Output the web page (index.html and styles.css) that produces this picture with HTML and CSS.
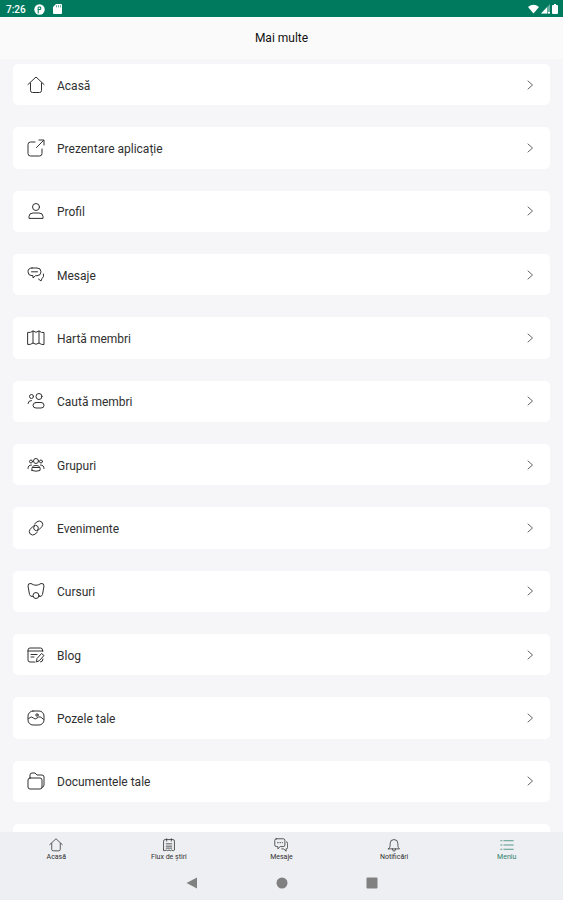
FILE: index.html
```html
<!DOCTYPE html>
<html lang="ro">
<head>
<meta charset="utf-8">
<meta name="viewport" content="width=device-width, initial-scale=1">
<title>Mai multe</title>
<link rel="stylesheet" href="styles.css">
</head>
<body>
<svg class="sprite" aria-hidden="true">
  <symbol id="home" viewBox="0 0 18 18"><path d="M1 8.500 9 1l8 7.500M3.500 7v7.500q0 2 2 2h7q2 0 2-2V7"/></symbol>
  <symbol id="chevron" viewBox="0 0 8 12"><path d="m2 2 4.500 4L2 10"/></symbol>
</svg>
<div class="screen">
  <div class="status">
    <span class="clock">7:26</span>
    <svg class="solid" width="11" height="11" viewBox="0 0 11 11"><circle cx="5.500" cy="5.500" r="5.200"/><path class="cut" d="M4.200 9V3h2.500v2.500H4.200"/></svg>
    <svg class="solid" width="9" height="10" viewBox="0 0 9 10"><path d="M3 0h5q1 0 1 1v8q0 1-1 1H1q-1 0-1-1V3Z"/><path class="cut thin" d="M3.500 1.500V3m2-1.500V3m2-1.500V3"/></svg>
    <span class="signals">
      <svg class="solid" width="11" height="10" viewBox="0 0 11 10"><path d="M0 3Q5.500-1.500 11 3L5.500 9.500Z"/></svg>
      <svg class="solid" width="9" height="10" viewBox="0 0 9 10"><path opacity=".4" d="M9 0v9.500H0Z"/><path d="M6 3.200v6.300H0ZM7 8h2v1.500H7Z"/></svg>
      <svg class="solid" width="6" height="10" viewBox="0 0 6 10"><path d="M2 0h2v1h1q1 0 1 1v7q0 1-1 1H1q-1 0-1-1V2q0-1 1-1h1Z"/></svg>
    </span>
  </div>
  <header class="header"><h1>Mai multe</h1></header>
  <main class="content">
    <nav class="list" aria-label="Mai multe">
      <a class="card" href="#"><svg class="icon"><use href="#home"/></svg><span>Acasă</span><svg class="chevron"><use href="#chevron"/></svg></a>
      <a class="card" href="#"><svg class="icon" viewBox="0 0 18 18"><path d="M8 3H3.500q-2.500 0-2.500 2.500v9Q1 17 3.500 17h9q2.500 0 2.500-2.500V10M9.500 8.500 16.500 1.500M12 1h5v5"/></svg><span>Prezentare aplicație</span><svg class="chevron"><use href="#chevron"/></svg></a>
      <a class="card" href="#"><svg class="icon" viewBox="0 0 18 18"><circle cx="9" cy="5" r="3.500"/><path d="M2 16v-1.500q0-3.500 4-3.500h6q4 0 4 3.500V16Z"/></svg><span>Profil</span><svg class="chevron"><use href="#chevron"/></svg></a>
      <a class="card" href="#"><svg class="icon" viewBox="0 0 18 18"><path d="M5 2h5q4 0 4 3.800T10 9.700H8.500L6 12V9.700H5Q1 9.700 1 5.800T5 2ZM16.500 8q.8 3-1.500 4.500l-1 2.500-2.500-2M4.500 5.800h6"/></svg><span>Mesaje</span><svg class="chevron"><use href="#chevron"/></svg></a>
      <a class="card" href="#"><svg class="icon" viewBox="0 0 18 18"><path d="M1 3.500q2.500.5 5-1.500 3 2.500 6 0 2.500 2 5 1.500v12q-2.500.5-5-1.500-3 2.500-6 0-2.500 2-5 1.500ZM6 2v12m6-12v12"/></svg><span>Hartă membri</span><svg class="chevron"><use href="#chevron"/></svg></a>
      <a class="card" href="#"><svg class="icon" viewBox="0 0 18 18"><circle cx="4.500" cy="4.500" r="2"/><circle cx="12" cy="4.500" r="3"/><path d="M1 11.500q0-3 3.500-3M9 10.500h5q3 0 3 2.800t-3 2.700H9q-3 0-3-2.700t3-2.800Z"/></svg><span>Caută membri</span><svg class="chevron"><use href="#chevron"/></svg></a>
      <a class="card" href="#"><svg class="icon" viewBox="0 0 18 18"><circle cx="9" cy="5" r="2.500"/><circle cx="4" cy="5.500" r="1.500"/><circle cx="14" cy="5.500" r="1.500"/><path d="M5 14.500q-1-5 4-5t4 5q-4 1.500-8 0ZM1 12.500Q.8 9 4.500 9M17 12.500Q17.200 9 13.500 9M5.500 11.500h7"/></svg><span>Grupuri</span><svg class="chevron"><use href="#chevron"/></svg></a>
      <a class="card" href="#"><svg class="icon" viewBox="0 0 18 18"><path d="m7.500 5 2.500-2.200q2.500-1.800 4.800.2 2 2.500 0 4.800l-3 3q-2.300 1.800-4.300.2-2-2 0-4.200M10.500 13 8 15.200q-2.500 1.800-4.800-.2-2-2.500 0-4.800l3-3q2.300-1.800 4.300-.2 2 2 0 4.200"/></svg><span>Evenimente</span><svg class="chevron"><use href="#chevron"/></svg></a>
      <a class="card" href="#"><svg class="icon" viewBox="0 0 18 18"><path d="M6 14.500q-3 .5-3.500-2L1 4q0-3 3-2.500Q9 5 14 1.500q3-.5 3 2.500l-1.500 8.500q-.5 2.500-3.500 2"/><circle cx="9" cy="13.500" r="3"/></svg><span>Cursuri</span><svg class="chevron"><use href="#chevron"/></svg></a>
      <a class="card" href="#"><svg class="icon" viewBox="0 0 18 18"><path d="M15.500 5V4q0-2-2-2H3Q1 2 1 4v10q0 2 2 2h5M1 5h15M4 8.500h6M4 11h3M9.500 15.500l.5-3 4.500-5 2.500 2-4.500 5Zm4 .5q2.500 0 2.500-3"/></svg><span>Blog</span><svg class="chevron"><use href="#chevron"/></svg></a>
      <a class="card" href="#"><svg class="icon" viewBox="0 0 18 18"><rect x="1" y="2" width="16" height="14" rx="5"/><path d="M1.500 9.500q3-3 5-.5 1.500 2 3.500 0 3-3 6.500 1.500"/><circle cx="10" cy="6" r="1.200"/></svg><span>Pozele tale</span><svg class="chevron"><use href="#chevron"/></svg></a>
      <a class="card" href="#"><svg class="icon" viewBox="0 0 18 18"><rect x="1" y="6" width="14" height="11" rx="2"/><path d="M3 6V3q0-2 2-2h3l2 2h5q2 0 2 2v8q0 2-2 2.500"/></svg><span>Documentele tale</span><svg class="chevron"><use href="#chevron"/></svg></a>
      <div class="card-edge"></div>
    </nav>
  </main>
  <nav class="tabs" aria-label="Navigare">
    <a href="#"><svg class="tab-icon"><use href="#home"/></svg><span>Acasă</span></a>
    <a href="#"><svg class="tab-icon" viewBox="0 0 18 18"><path d="M2 15.500V4q0-2 2-2h10q2 0 2 2v11.500q-1.500 2-3.500 0-1.800 1.500-3.500 0-1.800 1.500-3.500 0-2 2-3.500 0ZM6 1v3m6-3v3M5.500 7.500h7m-7 3h7M5.500 13h7"/></svg><span>Flux de știri</span></a>
    <a href="#"><svg class="tab-icon" viewBox="0 0 18 18"><path d="M3 1h9q2 0 2 2v6q0 2-2 2H8l-3 3v-3H3q-2 0-2-2V3q0-2 2-2ZM16 5q1.500 0 1.500 2v5q0 2-2 2v3l-3-3H10M4.500 6h1m2 0h1m2 0h.5"/></svg><span>Mesaje</span></a>
    <a href="#"><svg class="tab-icon" viewBox="0 0 18 18"><path d="M2 14h14q-2-2-2-4V7q0-5-5-5T4 7v3q0 2-2 4Zm5 0q0 3 2 3t2-3"/></svg><span>Notificări</span></a>
    <a class="active" href="#" aria-current="page"><svg class="tab-icon" viewBox="0 0 18 18"><path d="M5 3.500h12M5 9h12M5 14.500h12M1 3.500h1.500M1 9h1.500M1 14.500h1.500"/></svg><span>Meniu</span></a>
  </nav>
  <div class="system">
    <button type="button" aria-label="Înapoi"><svg width="12" height="12" viewBox="0 0 12 12"><path d="M11 .5v11L.5 6Z"/></svg></button>
    <button type="button" aria-label="Ecran principal"><svg width="12" height="12" viewBox="0 0 12 12"><circle cx="6" cy="6" r="5.500"/></svg></button>
    <button type="button" aria-label="Recente"><svg width="12" height="12" viewBox="0 0 12 12"><rect x=".5" y=".5" width="11" height="11" rx="1"/></svg></button>
  </div>
</div>
</body>
</html>
```
FILE: styles.css
```css
* {
  box-sizing: border-box;
}

body {
  margin: 0;
  background: #f6f6f8;
  color: #303030;
  font-family: Roboto, "Liberation Sans", sans-serif;
}

a {
  color: inherit;
  text-decoration: none;
}

svg {
  display: block;
  flex: none;
  fill: none;
  stroke: currentColor;
  stroke-linecap: round;
  stroke-linejoin: round;
}

.sprite {
  position: absolute;
  width: 0;
  height: 0;
}

.screen {
  display: flex;
  flex-direction: column;
  height: 100vh;
}

.status {
  display: flex;
  align-items: center;
  gap: 8px;
  padding: 1px 5px 0 6px;
  height: 17px;
  background: #007a5f;
  color: #fff;
}

.clock {
  font-size: 10px;
  font-weight: 500;
}

.solid {
  fill: #fff;
  stroke: none;
}

.cut {
  fill: none;
  stroke: #007a5f;
}

.thin {
  stroke-width: 0.6;
}

.signals {
  display: flex;
  gap: 2px;
  margin-left: auto;
}

.header {
  display: flex;
  align-items: center;
  justify-content: center;
  height: 42px;
  background: #fafafa;
}

h1 {
  margin: 0;
  color: #111;
  font-size: 12px;
  font-weight: 400;
}

.content {
  flex: 1;
  min-height: 0;
  padding: 5px 13px 0;
  overflow: hidden;
}

.list {
  display: grid;
  grid-template-rows: repeat(12, minmax(36px, 1fr)) 8px;
  row-gap: 22px;
  height: 100%;
}

.card,
.card-edge {
  border-radius: 5px;
  background: #fff;
}

.card {
  display: flex;
  align-items: center;
  gap: 12px;
  padding: 0 16px 0 14px;
  font-size: 12px;
}

.card span {
  padding-top: 2px;
}

.card-edge {
  border-radius: 5px 5px 0 0;
}

.icon {
  width: 18px;
  height: 18px;
}

.chevron {
  width: 8px;
  height: 12px;
  margin-left: auto;
  color: #666;
}

.tabs {
  display: grid;
  grid-template-columns: repeat(5, 1fr);
  height: 34px;
  padding-top: 6px;
  background: #eeeff3;
  font-size: 7px;
  line-height: 8px;
}

.tabs a {
  display: flex;
  flex-direction: column;
  align-items: center;
  gap: 1px;
}

.tab-icon {
  width: 14px;
  height: 14px;
}

.active {
  color: #2f7f6c;
}

.system {
  display: flex;
  justify-content: center;
  gap: 66px;
  height: 34px;
  padding-top: 5px;
  background: #eeeff3;
}

.system button {
  display: grid;
  place-items: center;
  width: 24px;
  height: 24px;
  padding: 0;
  border: 0;
  background: none;
}

.system svg {
  fill: #808080;
  stroke: none;
}
```
